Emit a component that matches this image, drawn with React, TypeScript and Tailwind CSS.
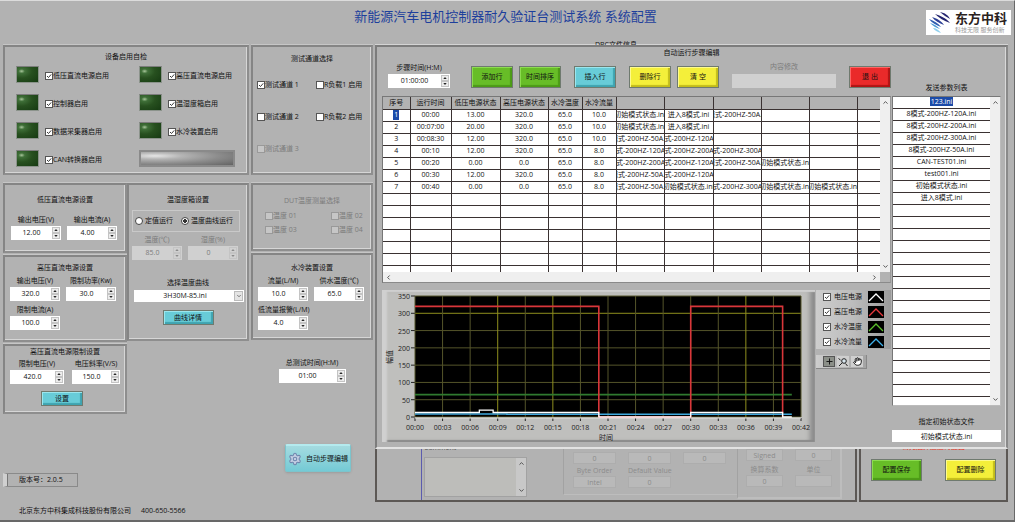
import type { ReactNode } from "react"
import clsx from "clsx"
import { ChevronDown, ChevronLeft, ChevronRight, ChevronUp, Hand, Plus, Settings } from "lucide-react"

const INIT = "初始模式状态.ini"
const ENTER = "进入8模式.ini"
const M50 = "8模式-200HZ-50A.ini"
const M120 = "8模式-200HZ-120A.ini"
const M200 = "8模式-200HZ-200A.ini"
const M300 = "8模式-200HZ-300A.ini"

const headers = ["序号", "运行时间", "低压电源状态", "高压电源状态", "水冷温度", "水冷流量", "", "", "", "", "", ""]

const steps = [
  ["1", "00:00", "13.00", "320.0", "65.0", "10.0", INIT, ENTER, M50],
  ["2", "00:07:00", "20.00", "320.0", "65.0", "10.0", INIT, ENTER],
  ["3", "00:08:30", "12.00", "320.0", "65.0", "10.0", M50, M120],
  ["4", "00:10", "12.00", "320.0", "65.0", "8.0", M120, M200, M300],
  ["5", "00:20", "0.00", "0.0", "65.0", "8.0", M200, M120, M50, INIT],
  ["6", "00:30", "12.00", "320.0", "65.0", "8.0", M50, M120],
  ["7", "00:40", "0.00", "0.0", "65.0", "8.0", M50, INIT, M300, INIT, INIT],
  [], [], [], [], [], [], [],
]

const files = ["123.ini", M120, M200, M300, M50, "CAN-TEST01.ini", "test001.ini", INIT, ENTER]

const series = [
  { name: "电压电源", color: "#ffffff" },
  { name: "高压电源", color: "#e8383d" },
  { name: "水冷温度", color: "#5bbf2b" },
  { name: "水冷流量", color: "#3fb0ea" },
]

export default function App() {
  return (
    <div className="min-h-screen border-t border-r border-b-2 border-[#686868] border-t-[#dcdcdc] bg-[#b2b2b2] font-['Open_Sans','Noto_Sans_CJK_SC',sans-serif] text-[7px] leading-[10px] text-[#111]">
      <header className="grid h-10 grid-cols-[1fr_auto_1fr] pr-[3px]">
        <h1 className="col-start-2 pt-[5px] text-[13px] leading-5 text-[#1d3f9c]">
          新能源汽车电机控制器耐久验证台测试系统 系统配置
        </h1>
        <Logo />
      </header>
      <main className="grid grid-cols-[375px_minmax(0,1fr)]">
        <DeviceSettings />
        <div className="pr-[6px]">
          <div className="flex h-1 items-start overflow-hidden pl-[220px] leading-[7px]">DBC文件信息</div>
          <StepEditor />
          <Background />
        </div>
      </main>
    </div>
  )
}

function Logo() {
  return (
    <div className="mt-[9px] flex h-[25px] w-[85px] items-center gap-1 justify-self-end bg-white pl-[3px]">
      <svg viewBox="0 0 22 22" className="size-[22px] shrink-0" aria-hidden="true">
        <path d="M11 0c5 1 8 3 10 7-3-2-7-4-10-7z" fill="#25256f" />
        <path d="M6 2c6 2 11 4 15 9-6-2-11-5-15-9z" fill="#25256f" />
        <path d="M3 5c6 2 9 4 12 8-5-2-9-4-12-8z" fill="#2b3f96" />
        <path d="M0 7c5 2 9 4 12 8-5-2-9-4-12-8z" fill="#2f5db0" />
        <path d="M1 11c4 1 7 3 10 6-4-1-7-3-10-6z" fill="#4c9bd6" />
        <path d="M4 16c3 0 6 2 8 5-3-1-6-2-8-5z" fill="#8fd0ee" />
      </svg>
      <div className="whitespace-nowrap">
        <div className="text-[13px] leading-[15px] font-bold text-[#2a2220]">东方中科</div>
        <div className="text-[6px] leading-[8px] text-[#9a9a9a]">科技无限 服务创新</div>
      </div>
    </div>
  )
}

function Panel({ className, children }: { className?: string; children: ReactNode }) {
  return (
    <section
      className={clsx(
        "border-2 border-[#858585] border-r-[#8e8e8e] border-b-[#8e8e8e] shadow-[inset_-1px_-1px_0_#d6d6d6,0_-1px_0_#c6c6c6]",
        className,
      )}
    >
      {children}
    </section>
  )
}

interface FieldProps {
  label: string
  value: string
  className?: string
  disabled?: boolean
}

function NumberField({ label, value, className, disabled }: FieldProps) {
  return (
    <div className={clsx("flex flex-col gap-px", disabled && "text-[#7c7c7c]", className)}>
      <label htmlFor={label + value} className="text-center whitespace-nowrap">
        {label}
      </label>
      <div className={clsx("flex h-[14px] w-full", disabled ? "bg-[#d0d0d0]" : "bg-white")}>
        <input
          id={label + value}
          defaultValue={value}
          disabled={disabled}
          className="min-w-0 flex-1 text-center outline-none"
        />
        <span className="mr-px flex w-2 shrink-0 flex-col justify-center">
          <SpinButton up label={`${label} +`} disabled={disabled} />
          <SpinButton label={`${label} -`} disabled={disabled} />
        </span>
      </div>
    </div>
  )
}

function SpinButton({ up, label, disabled }: { up?: boolean; label: string; disabled?: boolean }) {
  return (
    <button
      aria-label={label}
      disabled={disabled}
      className="grid h-1.5 place-items-center border border-[#c4c4c4] bg-[#ececec] disabled:bg-[#d0d0d0]"
    >
      <svg viewBox="0 0 5 3" className="h-0.5 w-1" fill={disabled ? "#8a8a8a" : "#222"}>
        <path d={up ? "M0 3 2.5 0 5 3z" : "M0 0 2.5 3 5 0z"} />
      </svg>
    </button>
  )
}

interface CheckProps {
  label: string
  checked?: boolean
  disabled?: boolean
  className?: string
}

function Check({ label, checked, disabled, className }: CheckProps) {
  return (
    <label className={clsx("flex items-center whitespace-nowrap", disabled && "text-[#7c7c7c]", className)}>
      <span className="relative size-2 shrink-0">
        <input
          type="checkbox"
          defaultChecked={checked}
          disabled={disabled}
          className="peer block size-2 appearance-none border border-[#555] bg-white disabled:border-[#999] disabled:bg-[#c6c6c6]"
        />
        <svg viewBox="0 0 8 8" className="pointer-events-none absolute inset-0 hidden size-2 peer-checked:block">
          <path d="M2 4l1.5 1.5L6.2 2.4" fill="none" stroke="#222" strokeWidth="0.9" />
        </svg>
      </span>
      <span>{label}</span>
    </label>
  )
}

function RadioOption({ label, checked }: { label: string; checked?: boolean }) {
  return (
    <label className="flex items-center gap-0.5 whitespace-nowrap">
      <input
        type="radio"
        name="run-mode"
        defaultChecked={checked}
        className="size-2 shrink-0 appearance-none rounded-full border border-[#444] bg-white checked:bg-[radial-gradient(#333_0_2px,#fff_2px)]"
      />
      {label}
    </label>
  )
}

const tones = {
  green: "bg-[#67bd27] shadow-[inset_1px_1px_0_#8cdc4f,inset_-2px_-2px_1px_#4c9a17]",
  cyan: "bg-[#68ccd8] shadow-[inset_1px_1px_0_#9be6ee,inset_-2px_-2px_1px_#3fa3b0]",
  yellow: "bg-[#f4ef3a] shadow-[inset_1px_1px_0_#fffb8c,inset_-2px_-2px_1px_#c2bc1c]",
  red: "bg-[#ea2a2a] shadow-[inset_1px_1px_0_#ff6464,inset_-2px_-2px_1px_#b01414]",
}

function ActionButton({ tone, className, children }: { tone: keyof typeof tones; className: string; children: ReactNode }) {
  return (
    <button className={clsx("border border-[#6f7a6f] text-center whitespace-nowrap", tones[tone], className)}>
      {children}
    </button>
  )
}

function Led({ label }: { label: string }) {
  return (
    <div className="flex h-[17px] items-center gap-1.5">
      <span className="h-[17px] w-[23px] shrink-0 border border-[#8b938b] border-t-[#7c7c7c] bg-[radial-gradient(ellipse_at_22%_28%,#a9c79c_0,#3f6f38_14%,#27501f_45%,#163a12_100%)]" />
      <Check label={label} checked className="pt-0.5" />
    </div>
  )
}

function DeviceSettings() {
  return (
    <div className="flex flex-col pt-1 pr-0.5 pl-[3px]">
      <div className="grid grid-cols-3 gap-0.5">
        <Panel className="col-span-2 h-[130px] pt-[5px]">
          <h2 className="text-center">设备启用自检</h2>
          <div className="mt-1 grid grid-cols-[123px_auto] gap-y-[11px] pl-[11px]">
            <Led label="低压直流电源启用" />
            <Led label="高压直流电源启用" />
            <Led label="控制器启用" />
            <Led label="温湿度箱启用" />
            <Led label="数据采集器启用" />
            <Led label="水冷装置启用" />
            <Led label="CAN转换器启用" />
            <div className="h-[17px] w-24 border-2 border-[#8a8a8a] bg-[radial-gradient(ellipse_at_15%_30%,#e6e6e6_0,#b4b4b4_25%,#8a8a8a_60%,#636363_100%)]" />
          </div>
        </Panel>
        <Panel className="pt-[7px]">
          <h2 className="text-center">测试通道选择</h2>
          <div className="mt-4 grid grid-cols-[59px_auto] gap-y-[22px] pl-1">
            <Check label="测试通道 1" checked />
            <Check label="R负载1 启用" />
            <Check label="测试通道 2" />
            <Check label="R负载2 启用" />
            <Check label="测试通道 3" disabled />
          </div>
        </Panel>
      </div>

      <div className="mt-2 grid grid-cols-3 items-start gap-0.5">
        <div className="grid gap-0.5">
          <Panel className="px-[6px] pt-[10px] pb-[11px]">
            <h2 className="text-center">低压直流电源设置</h2>
            <div className="mt-[10px] flex gap-1.5">
              <NumberField label="输出电压(V)" value="12.00" className="w-[50px]" />
              <NumberField label="输出电流(A)" value="4.00" className="w-[50px]" />
            </div>
          </Panel>
          <Panel className="px-[5px] pt-[6px] pb-[10px]">
            <h2 className="text-center">高压直流电源设置</h2>
            <div className="mt-[3px] grid grid-cols-[50px_50px] gap-x-1.5 gap-y-1">
              <NumberField label="输出电压(V)" value="320.0" />
              <NumberField label="限制功率(Kw)" value="30.0" />
              <NumberField label="限制电流(A)" value="100.0" />
            </div>
          </Panel>
          <Panel className="px-[5px] pt-px pb-[6px]">
            <h2 className="text-center">高压直流电源限制设置</h2>
            <div className="mt-0.5 flex gap-2">
              <NumberField label="限制电压(V)" value="420.0" className="w-[54px]" />
              <NumberField label="电压斜率(V/S)" value="150.0" className="w-12" />
            </div>
            <ActionButton tone="cyan" className="mt-[7px] ml-[31px] block h-[15px] w-[42px]">
              设置
            </ActionButton>
          </Panel>
        </div>

        <Panel className="px-[3px] pt-[10px] pb-[14px]">
          <h2 className="text-center">温湿度箱设置</h2>
          <div className="mt-[5px] mr-1 flex h-[22px] items-center justify-between border border-[#c9c9c9] pr-1.5 pl-0.5">
            <RadioOption label="定值运行" />
            <RadioOption label="温度曲线运行" checked />
          </div>
          <div className="mt-[3px] flex gap-1.5">
            <NumberField label="温度(℃)" value="85.0" className="w-[50px]" disabled />
            <NumberField label="湿度(%)" value="0" className="w-[50px]" disabled />
          </div>
          <label htmlFor="curve" className="mt-[18px] block text-center">
            选择温度曲线
          </label>
          <div className="relative mt-0.5 ml-0.5">
            <select
              id="curve"
              className="block h-3 w-full appearance-none bg-white pr-2 text-center [text-align-last:center] outline-none"
            >
              <option>3H30M-85.ini</option>
            </select>
            <span className="pointer-events-none absolute inset-y-px right-px grid w-[9px] place-items-center border border-[#bbb] bg-[#e4e4e4]">
              <ChevronDown size={6} />
            </span>
          </div>
          <ActionButton tone="cyan" className="mx-auto mt-2 block h-[15px] w-[51px]">
            曲线详情
          </ActionButton>
        </Panel>

        <div className="grid gap-0.5">
          <Panel className="pt-[11px] pb-[14px] pl-3">
            <h2 className="pr-3 text-center text-[#7c7c7c]">DUT温度测量选择</h2>
            <div className="mt-[5px] grid grid-cols-[66px_auto] gap-y-1">
              <Check label="温度 01" disabled />
              <Check label="温度 02" disabled />
              <Check label="温度 03" disabled />
              <Check label="温度 04" disabled />
            </div>
          </Panel>
          <Panel className="px-[5px] pt-2 pb-2">
            <h2 className="text-center">水冷装置设置</h2>
            <div className="mt-[3px] grid grid-cols-[50px_50px] gap-x-1.5 gap-y-1">
              <NumberField label="流量(L/M)" value="10.0" />
              <NumberField label="供水温度(℃)" value="65.0" />
              <NumberField label="低流量报警(L/M)" value="4.0" />
            </div>
          </Panel>
          <NumberField label="总测试时间(H:M)" value="01:00" className="mx-auto mt-4 w-[67px]" />
        </div>
      </div>

      <button className="mt-[30px] mr-[22px] flex h-7 w-[66px] items-center justify-between self-end rounded-xs border border-t-2 border-[#7cc4cc] border-t-[#b4eaee] bg-linear-to-b from-[#a4dbe0] to-[#74cad5] px-0.5 whitespace-nowrap shadow-sm">
        <Settings size={14} color="#6f86ad" fill="#c3cde2" strokeWidth={1.8} />
        自动步骤编辑
      </button>
      <div className="mt-px h-[14px] w-[75px] border border-l-4 border-[#8a8a8a] border-l-[#d0d0d0] pl-3 leading-3 shadow-[inset_1px_0_0_#777]">
        版本号：2.0.5
      </div>
      <footer className="mt-[19px] flex gap-2.5 pl-4">
        <span>北京东方中科集成科技股份有限公司</span>
        <span>400-650-5566</span>
      </footer>
    </div>
  )
}

function StepEditor() {
  return (
    <section className="border-2 border-[#7c7c7c] border-r-[#8a8a8a] border-b-[#e2e2e2] px-[5px] pt-px pb-[5px] shadow-[inset_-1px_0_0_#d9d9d9,0_-1px_0_#d4d4d4]">
      <h2 className="text-center">自动运行步骤编辑</h2>
      <div className="grid grid-cols-[minmax(0,1fr)_109px] gap-x-px">
        <div>
          <Toolbar />
          <StepTable />
          <div className="mt-[7px] grid grid-cols-[minmax(0,1fr)_75px] gap-x-px">
            <Chart />
            <Legend />
          </div>
        </div>
        <FileList />
      </div>
    </section>
  )
}

function Toolbar() {
  return (
    <div className="flex h-[38px] items-end gap-[13px] pb-2 pl-1.5">
      <NumberField label="步骤时间(H:M)" value="01:00:00" className="mr-2 w-[62px]" />
      <div className="flex gap-1.5">
        <ActionButton tone="green" className="h-[22px] w-[42px]">添加行</ActionButton>
        <ActionButton tone="green" className="h-[22px] w-[42px]">时间排序</ActionButton>
      </div>
      <ActionButton tone="cyan" className="h-[22px] w-[42px]">插入行</ActionButton>
      <div className="flex gap-1.5">
        <ActionButton tone="yellow" className="h-[22px] w-[42px]">删除行</ActionButton>
        <ActionButton tone="yellow" className="h-[22px] w-[42px]">清 空</ActionButton>
      </div>
      <div className="flex flex-1 flex-col gap-0.5 text-[#7c7c7c]">
        <label htmlFor="content" className="text-center">内容修改</label>
        <input id="content" disabled className="block h-[14px] w-full bg-[#d0d0d0]" />
      </div>
      <ActionButton tone="red" className="h-[22px] w-[42px]">退 出</ActionButton>
    </div>
  )
}

function VerticalScroll({ faded }: { faded?: boolean }) {
  return (
    <div
      className={clsx(
        "flex w-[10px] shrink-0 flex-col items-center justify-between py-0.5",
        faded ? "bg-[#c8c8c8]" : "bg-[#efefef]",
      )}
    >
      <ChevronUp size={7} strokeWidth={3} color="#444" />
      <ChevronDown size={7} strokeWidth={3} color="#444" />
    </div>
  )
}

function StepTable() {
  return (
    <div className="border border-[#777] border-r-[#999] border-b-[#8a8a8a]">
      <div className="flex h-[175px] overflow-hidden bg-white">
        <div className="min-w-0 flex-1">
          <table className="w-full table-fixed border-collapse text-center">
            <colgroup>
              <col className="w-[27px]" />
              <col className="w-[41px]" />
              <col className="w-[49px]" />
              <col className="w-12" />
              <col className="w-[34px]" />
              <col className="w-[34px]" />
              <col className="w-12" />
              <col className="w-[49px]" />
              <col className="w-12" />
              <col className="w-12" />
              <col className="w-12" />
              <col />
            </colgroup>
            <thead>
              <tr className="h-3 bg-[#b2b2b2]">
                {headers.map((header, i) => (
                  <th key={i} className="border-r border-b border-[#3a3232] p-0 font-normal whitespace-nowrap last:border-r-0">
                    {header}
                  </th>
                ))}
              </tr>
            </thead>
            <tbody>
              {steps.map((step, row) => (
                <tr key={row} className="h-3">
                  {headers.map((_, col) => (
                    <td key={col} className="h-3 border-r border-b border-[#3a3232] p-0 last:border-r-0">
                      <div className="flex justify-center overflow-hidden whitespace-nowrap">
                        <span className={clsx(row === 0 && col === 0 && "bg-[#1c4ba8] px-px text-white")}>{step[col]}</span>
                      </div>
                    </td>
                  ))}
                </tr>
              ))}
            </tbody>
          </table>
        </div>
        <VerticalScroll />
      </div>
      <div className="flex h-[10px]">
        <div className="flex flex-1 items-center justify-between bg-[#efefef] px-0.5">
          <ChevronLeft size={7} strokeWidth={3} color="#444" />
          <ChevronRight size={7} strokeWidth={3} color="#444" />
        </div>
        <div className="w-[10px]" />
      </div>
    </div>
  )
}

// plot area inside the chart's viewBox
const LEFT = 33
const BOTTOM = 127
const px = (minute: number) => LEFT + (minute * 386) / 42
const py = (value: number) => BOTTOM - (value * 121) / 350
const line = (points: number[][]) => points.map(([m, v]) => `${px(m)},${py(v)}`).join(" ")

function Chart() {
  const xTicks = Array.from({ length: 15 }, (_, i) => i * 3)
  const yTicks = Array.from({ length: 8 }, (_, i) => i * 50)

  return (
    <div className="bg-[#bfbfbd] shadow-[inset_6px_0_2px_-1px_#d0d0d0,inset_0_2px_1px_#cfcfcf,inset_-6px_0_5px_-1px_#8a8a8a,inset_0_-2px_1px_#8a8a8a]">
      <svg viewBox="0 0 433 152" className="block w-full text-[7px]" fill="#1c1c1c">
        <rect x={LEFT} y="6" width="386" height="121" fill="#000" />
        {yTicks.map((v) => (
          <g key={v}>
            <path d={`M${LEFT} ${py(v)}H419`} stroke={v === 300 ? "#8f8f1e" : "#55552a"} />
            <path d={`M29 ${py(v)}h4`} stroke="#222" />
            <text x="28" y={py(v) + 3} textAnchor="end">{v}</text>
          </g>
        ))}
        {xTicks.map((m) => (
          <g key={m}>
            <path d={`M${px(m)} 6V${BOTTOM}`} stroke={[9, 15, 36].includes(m) ? "#8f8f1e" : "#55552a"} />
            <path d={`M${px(m)} 128v3`} stroke="#222" />
            <text x={px(m)} y="140" textAnchor="middle">{`00:${String(m).padStart(2, "0")}`}</text>
          </g>
        ))}
        <path d={`M${LEFT} ${BOTTOM + 1}H419`} stroke="#e4e4e4" />
        <g fill="none">
          <polyline points={line([[0, 65], [41, 65]])} stroke="#2f7a2f" strokeWidth="1.8" />
          <polyline points={line([[0, 320], [20, 320], [20, 0], [30, 0], [30, 320], [40, 320], [40, 0]])} stroke="#d9363a" strokeWidth="1.6" />
          <polyline points={line([[0, 9], [10, 9], [10, 8], [41, 8]])} stroke="#3fa9dd" strokeWidth="1.5" />
          <polyline
            points={line([[0, 13], [7, 13], [7, 20], [8.5, 20], [8.5, 13], [20, 13], [20, 0], [30, 0], [30, 13], [40, 13], [40, 0], [41, 0]])}
            stroke="#fff"
            strokeWidth="1.3"
          />
        </g>
        <text x="224" y="150" textAnchor="middle">时间</text>
        <text transform="translate(10 67) rotate(-90)" textAnchor="middle">幅值</text>
      </svg>
    </div>
  )
}

function Legend() {
  return (
    <div>
      <div className="flex flex-col gap-[3px] bg-linear-to-r from-[#cdcdcd] via-[#bcbcbc] to-[#9a9a9a] px-[7px] py-px">
        {series.map((item) => (
          <div key={item.name} className="flex h-3 items-center justify-between">
            <Check label={item.name} checked className="gap-[3px]" />
            <svg viewBox="0 0 16 12" className="h-3 w-4 shrink-0">
              <rect width="16" height="12" fill="#000" />
              <path d="M1 10l7-7 7 7" fill="none" stroke={item.color} strokeWidth="1.3" />
            </svg>
          </div>
        ))}
      </div>
      <div className="mt-1.5 flex h-[14px] w-[51px] items-center gap-0.5 border-r border-b border-[#888] bg-linear-to-r from-[#cdcdcd] to-[#a4a4a4] pl-[7px]">
        <button aria-label="十字光标" className="grid h-[11px] w-3 place-items-center border border-[#555] bg-[#8b8f88]">
          <Plus size={9} strokeWidth={2.5} />
        </button>
        <button aria-label="缩放" className="grid h-[11px] w-3 place-items-center bg-[#cfcfcf]">
          <svg viewBox="0 0 10 10" className="size-[10px]" fill="none" stroke="#222">
            <circle cx="6" cy="4" r="2.3" fill="#d8e6ee" />
            <path d="M4.2 5.8L1 9M0.5 1.5l2 1.5M7.5 6.5l2 2.5" />
          </svg>
        </button>
        <button aria-label="平移" className="grid h-[11px] w-3 place-items-center bg-[#cfcfcf]">
          <Hand size={9} strokeWidth={2.5} fill="#fff" />
        </button>
      </div>
    </div>
  )
}

function FileList() {
  return (
    <div>
      <h3 className="pt-[25px] pb-[3px] text-center">发送参数列表</h3>
      <div className="flex h-[310px] border border-[#777] border-r-[#bbb] border-b-[#bbb] bg-white">
        <ul className="min-w-0 flex-1 text-center">
          {Array.from({ length: 25 }, (_, i) => (
            <li key={i} className="h-3 border-b border-[#3a3232]">
              <span className={clsx(i === 0 && "bg-[#1c4ba8] px-px text-white")}>{files[i]}</span>
            </li>
          ))}
        </ul>
        <VerticalScroll />
      </div>
      <label htmlFor="init-file" className="mt-[11px] block text-center">
        指定初始状态文件
      </label>
      <input id="init-file" defaultValue={INIT} className="mt-[3px] block h-3 w-full bg-white text-center" />
    </div>
  )
}

function DimField({ label, value }: { label?: string; value: string }) {
  return (
    <div>
      {label && <label htmlFor={"dim-" + label} className="block text-center whitespace-nowrap">{label}</label>}
      <input
        id={label && "dim-" + label}
        aria-label={label ? undefined : "数值"}
        disabled
        defaultValue={value}
        className="block h-3 w-full border border-[#adadad] bg-[#b9b9b9] text-center"
      />
    </div>
  )
}

// the DBC page that stays visible below the step editor
function Background() {
  return (
    <div className="grid grid-cols-[minmax(0,1fr)_149px] gap-x-0.5">
      <div className="flex h-[53px] overflow-hidden border-r-2 border-b-2 border-l-2 border-[#5c5855] text-[#8c8c8c]">
        <div className="ml-11 w-[106px] border-l border-[#5c5cae] pl-0.5">
          <div className="flex h-0.5 items-end overflow-hidden leading-[7px] text-[#555]">Comment</div>
          <div className="mt-1.5 flex h-10 border border-[#a2a2a2] bg-[#bdbdba]">
            <textarea aria-label="Comment" className="min-w-0 flex-1 resize-none" />
            <VerticalScroll faded />
          </div>
        </div>
        <div className="ml-[36px] grid h-[46px] flex-1 grid-cols-[43px_43px_43px] content-start gap-x-3 gap-y-0.5 border-b border-l border-[#a2a2a2] border-b-[#bdbdbd] pt-[3px] pl-[9px]">
          <DimField value="0" />
          <DimField value="0" />
          <DimField value="0" />
          <DimField label="Byte Order" value="Intel" />
          <DimField label="Default Value" value="0" />
        </div>
        <div className="mr-[13px] grid h-[50px] w-[105px] grid-cols-2 content-start gap-x-3 gap-y-1 border-r-2 border-b-2 border-l border-[#bdbdbd] border-l-[#a2a2a2] px-2">
          <DimField value="Signed" />
          <DimField value="0" />
          <DimField label="换算系数" value="0" />
          <DimField label="单位" value="" />
        </div>
      </div>
      <div className="h-[53px] border-r-2 border-b-2 border-l-2 border-[#5c5855]">
        <div className="flex h-0.5 items-end justify-center overflow-hidden leading-[9px] text-[#e8321c]">
          请先选择通道再配置
        </div>
        <div className="mt-2 flex justify-between px-[10px]">
          <ActionButton tone="green" className="h-[22px] w-[51px]">配置保存</ActionButton>
          <ActionButton tone="yellow" className="h-[22px] w-[51px]">配置删除</ActionButton>
        </div>
      </div>
    </div>
  )
}
